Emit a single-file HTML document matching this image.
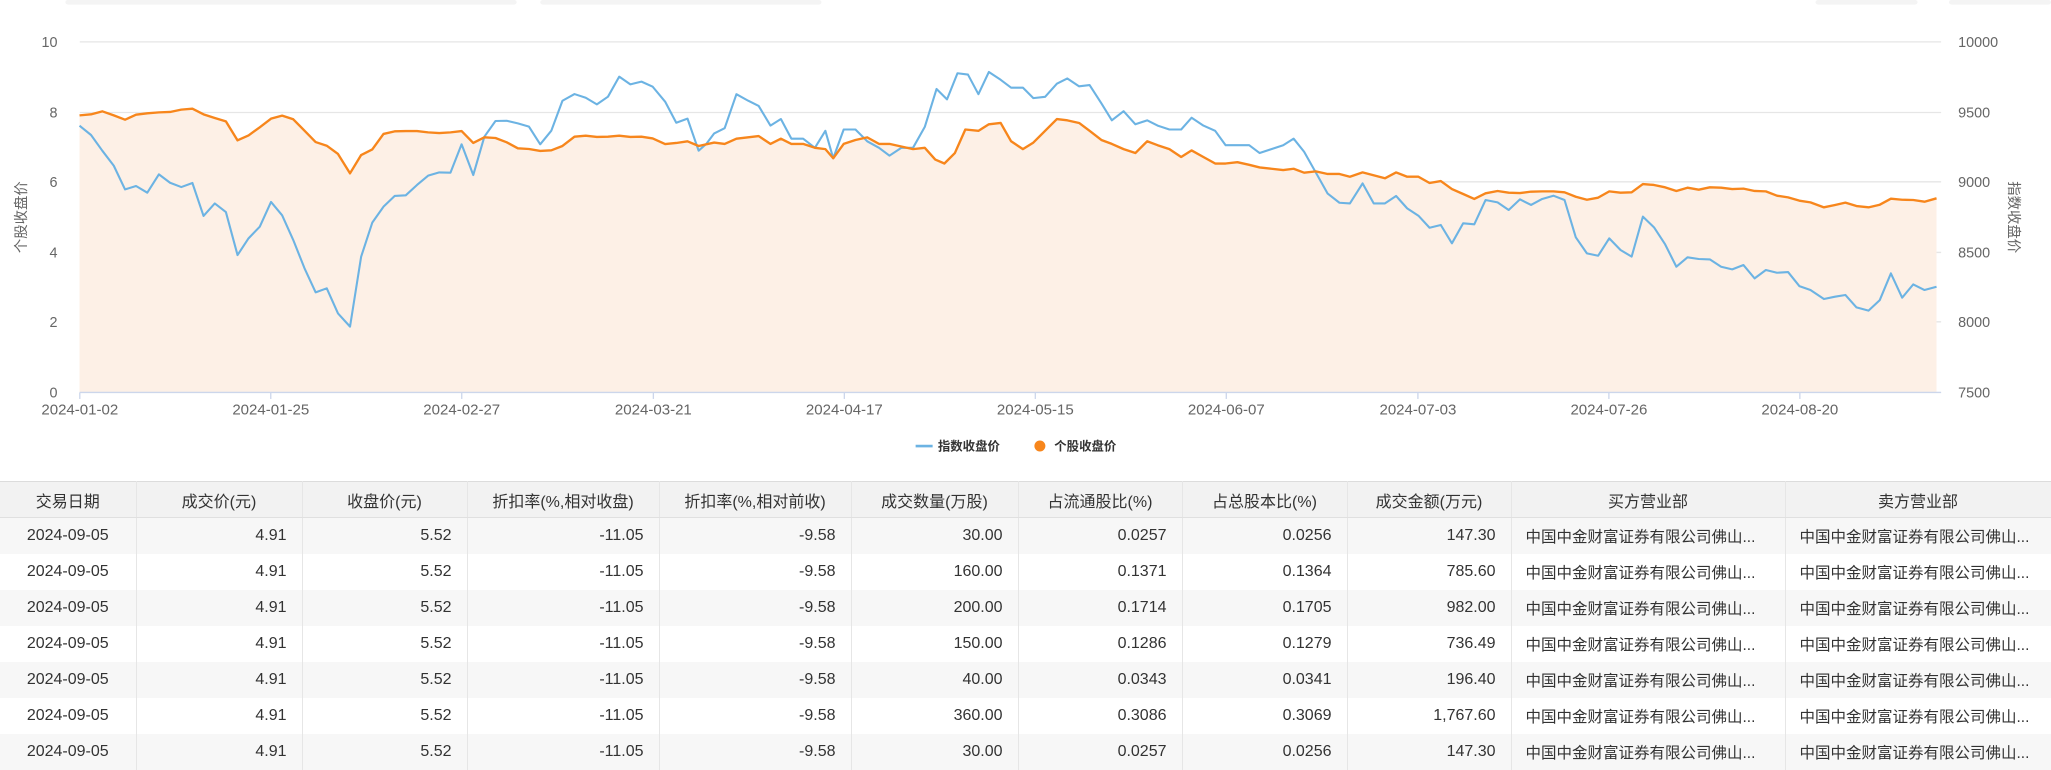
<!DOCTYPE html>
<html><head><meta charset="utf-8"><style>
body{margin:0;width:2051px;height:769px;overflow:hidden;background:#fff;font-family:"Liberation Sans","Noto Sans CJK SC",sans-serif;position:relative}
svg{position:absolute;left:0;top:0}
table{position:absolute;left:0;top:481px;border-collapse:collapse;table-layout:fixed;width:2051px;font-size:16px;color:#333}
td,th{height:36px;padding:0 15px;border-right:1px solid #e6e6e6;white-space:nowrap;overflow:hidden;box-sizing:border-box;font-weight:normal}
th{background:#f2f2f2;text-align:center;border-top:1px solid #dcdcdc;border-bottom:1px solid #e0e0e0}
td{text-align:right}
td:first-child{text-align:center}
td.b{text-align:left;padding-left:14px;font-size:15.5px}
tr:nth-child(even) td{background:#f7f7f7}
</style></head><body>
<svg width="2051" height="470" viewBox="0 0 1568 359.3" font-family="Liberation Sans,Noto Sans CJK SC,sans-serif">
<rect x="50" y="0" width="345" height="3.5" rx="2" fill="#f4f4f4"/>
<rect x="413" y="0" width="215" height="3.5" rx="2" fill="#f4f4f4"/>
<rect x="1388" y="0" width="78" height="3.5" rx="2" fill="#f4f4f4"/>
<rect x="1490" y="0" width="78" height="3.5" rx="2" fill="#f4f4f4"/>
<g stroke="#e6e6e6" stroke-width="1">
<line x1="61" x2="1484" y1="32" y2="32"/><line x1="61" x2="1484" y1="86" y2="86"/><line x1="61" x2="1484" y1="139" y2="139"/><line x1="61" x2="1484" y1="193" y2="193"/><line x1="61" x2="1484" y1="246" y2="246"/>
</g>
<polygon fill="#fdf0e6" points="60.8,300 60.8,88.2 69.6,87.4 78.2,85.1 87,88.2 95.6,91.5 104,87.7 112.6,86.6 121.5,85.9 130,85.6 138.6,83.8 147.1,83.1 155.6,87.4 164.2,90.2 172.7,92.8 181.6,107.3 190,103.5 198.6,97.3 207.2,90.7 215.7,88.4 224.2,91.2 232.8,99.9 241.3,108.6 249.8,111.4 258.4,117.7 267.6,132.5 276.1,118.5 284.6,114.2 293.2,102.4 301.7,100.4 310.2,100.2 318.8,100.2 327.3,101.2 335.8,101.7 344.4,101.2 352.9,100.2 361.8,109.3 370.3,105 378.8,105.5 387.4,108.8 395.9,113.4 404.4,113.9 413,115.4 421.5,114.9 430,111.6 439.2,104.5 447.8,103.7 456.3,104.7 464.8,104.5 473.4,103.7 481.9,104.7 490.4,104.5 499,105.8 508.5,110.1 517,109.3 525.6,108 534.1,111.6 546,109 554,110 563,106 572,105 580,104 589,110 597,106 605,110 614,110 623,113 631,114 637,121 645,110 654,107 663,105 672,110 680,110 689,112 698,114 707,113 715,122 722,125 730,117 738,99 748,100 756,95 765,94 773,108 782,114 790,109 799,100 808,91 816,92 825,94 833,100 842,107 850,110 859,114 868,117 877,108 885,111 894,114 903,120 911,115 920,120 929,125 937,125 946,124 955,126 963,128 972,129 981,130 989,129 997,132 1006,131 1015,133 1024,133 1032,135.1 1041.7,131.8 1058.8,136.3 1067.3,131.8 1075.8,135.1 1084.4,135.1 1092.9,139.9 1101.5,138.4 1110,144.5 1118.6,148.3 1127.1,152.1 1135.7,147.8 1144.9,146 1153.4,147.3 1162,147.6 1170.5,146.5 1179,146.3 1187.6,146.3 1196.1,147 1204.7,150.4 1213.2,152.7 1221.8,151.1 1230.3,146.3 1238.9,147.3 1247.4,147 1256,140.7 1264.5,141.4 1273,143.2 1281.6,146 1290.1,143.5 1298.7,145 1307.2,143.2 1315.8,143.5 1324.3,144.5 1332.9,144.2 1341.4,146 1350,146.3 1358.5,149.6 1367,150.9 1375.6,153.4 1384.1,154.7 1394.4,158.5 1402.9,156.7 1410.8,154.9 1419.3,157.5 1428.5,158.5 1437.1,156.5 1445.6,151.9 1454.2,152.7 1462.7,152.9 1471.3,154.2 1480.5,151.6 1480.5,300"/>
<line x1="61" x2="1484" y1="300" y2="300" stroke="#ccd6eb"/>
<g stroke="#ccd6eb"><line x1="61" x2="61" y1="300" y2="305"/><line x1="207" x2="207" y1="300" y2="305"/><line x1="353" x2="353" y1="300" y2="305"/><line x1="499.5" x2="499.5" y1="300" y2="305"/><line x1="645.5" x2="645.5" y1="300" y2="305"/><line x1="791.5" x2="791.5" y1="300" y2="305"/><line x1="937.5" x2="937.5" y1="300" y2="305"/><line x1="1084" x2="1084" y1="300" y2="305"/><line x1="1230" x2="1230" y1="300" y2="305"/><line x1="1376" x2="1376" y1="300" y2="305"/></g>
<polyline fill="none" stroke="#6cb3e3" stroke-width="1.6" stroke-linejoin="round" points="60.8,96.1 69.6,103.2 78.2,115.2 87,126.7 95.6,144.8 104,142.2 112.6,147.3 121.5,133.3 130,139.7 138.6,143 147.1,139.9 155.6,165.1 164.2,155.5 172.7,162.1 181.6,195 190,182.2 198.6,173.3 207.2,154.4 215.7,164.6 224.2,183.5 232.8,205.1 241.3,223.5 249.8,220.4 258.4,239.6 267.6,249.7 276.1,196.2 284.6,170.2 293.2,158 301.7,149.8 310.2,149.3 318.8,141.4 327.3,134.3 335.8,131.8 344.4,132 352.9,110.3 361.8,133.8 370.3,104.5 378.8,92.5 387.4,92.3 395.9,94.3 404.4,96.8 413,110.3 421.5,99.9 430,77 439.2,71.9 447.8,74.7 456.3,79.8 464.8,73.9 473.4,58.6 481.9,64.5 490.4,62.4 499,66.3 508.5,77.7 517,93.8 525.6,90.7 534.1,115.2 540,110 546,102 554,98 563,72 572,77 580,81 589,96 597,91 605,106 614,106 623,113 631,100 637,121 645,99 654,99 663,108 672,113 680,119 689,113 698,113 707,97 716,68 724,76 732,56 740,57 748,72 756,55 765,61 773,67 782,67 790,75 799,74 808,64 816,60 825,66 833,65 842,79 850,92 859,85 868,95 877,92 885,96 894,99 903,99 911,90 920,96 929,100 937,111 946,111 955,111 963,117 972,114 981,111 989,106 997,116 1006,132 1015,148 1024,155 1032,155.5 1041.7,140.2 1050.2,155.5 1058.8,155.5 1067.3,149.8 1075.8,159.3 1084.4,164.9 1092.9,174.1 1101.5,172 1110,186 1118.6,170.7 1127.1,171.5 1135.7,152.9 1144.9,154.7 1153.4,160.5 1162,152.4 1170.5,156.7 1179,152.1 1187.6,149.6 1196.1,152.9 1204.7,181.4 1213.2,193.7 1221.8,195.5 1230.3,182.2 1238.9,191.1 1247.4,196.2 1256,165.6 1264.5,173.8 1273,186.8 1281.6,203.9 1290.1,196.7 1298.7,198 1307.2,198.3 1315.8,203.9 1324.3,205.9 1332.9,202.6 1341.4,212.8 1350,206.4 1358.5,208.5 1367,208 1375.6,218.7 1384.1,221.7 1394.4,228.6 1402.9,226.8 1410.8,225.5 1419.3,235 1428.5,237.5 1437.1,229.4 1445.6,209 1454.2,227.6 1462.7,217.4 1471.3,221.7 1480.5,219.2"/>
<polyline fill="none" stroke="#f7861c" stroke-width="1.8" stroke-linejoin="round" points="60.8,88.2 69.6,87.4 78.2,85.1 87,88.2 95.6,91.5 104,87.7 112.6,86.6 121.5,85.9 130,85.6 138.6,83.8 147.1,83.1 155.6,87.4 164.2,90.2 172.7,92.8 181.6,107.3 190,103.5 198.6,97.3 207.2,90.7 215.7,88.4 224.2,91.2 232.8,99.9 241.3,108.6 249.8,111.4 258.4,117.7 267.6,132.5 276.1,118.5 284.6,114.2 293.2,102.4 301.7,100.4 310.2,100.2 318.8,100.2 327.3,101.2 335.8,101.7 344.4,101.2 352.9,100.2 361.8,109.3 370.3,105 378.8,105.5 387.4,108.8 395.9,113.4 404.4,113.9 413,115.4 421.5,114.9 430,111.6 439.2,104.5 447.8,103.7 456.3,104.7 464.8,104.5 473.4,103.7 481.9,104.7 490.4,104.5 499,105.8 508.5,110.1 517,109.3 525.6,108 534.1,111.6 546,109 554,110 563,106 572,105 580,104 589,110 597,106 605,110 614,110 623,113 631,114 637,121 645,110 654,107 663,105 672,110 680,110 689,112 698,114 707,113 715,122 722,125 730,117 738,99 748,100 756,95 765,94 773,108 782,114 790,109 799,100 808,91 816,92 825,94 833,100 842,107 850,110 859,114 868,117 877,108 885,111 894,114 903,120 911,115 920,120 929,125 937,125 946,124 955,126 963,128 972,129 981,130 989,129 997,132 1006,131 1015,133 1024,133 1032,135.1 1041.7,131.8 1058.8,136.3 1067.3,131.8 1075.8,135.1 1084.4,135.1 1092.9,139.9 1101.5,138.4 1110,144.5 1118.6,148.3 1127.1,152.1 1135.7,147.8 1144.9,146 1153.4,147.3 1162,147.6 1170.5,146.5 1179,146.3 1187.6,146.3 1196.1,147 1204.7,150.4 1213.2,152.7 1221.8,151.1 1230.3,146.3 1238.9,147.3 1247.4,147 1256,140.7 1264.5,141.4 1273,143.2 1281.6,146 1290.1,143.5 1298.7,145 1307.2,143.2 1315.8,143.5 1324.3,144.5 1332.9,144.2 1341.4,146 1350,146.3 1358.5,149.6 1367,150.9 1375.6,153.4 1384.1,154.7 1394.4,158.5 1402.9,156.7 1410.8,154.9 1419.3,157.5 1428.5,158.5 1437.1,156.5 1445.6,151.9 1454.2,152.7 1462.7,152.9 1471.3,154.2 1480.5,151.6"/>
<g font-size="11" fill="#666" text-anchor="end">
<text x="44" y="36">10</text><text x="44" y="90">8</text><text x="44" y="143">6</text><text x="44" y="197">4</text><text x="44" y="250">2</text><text x="44" y="304">0</text>
</g>
<g font-size="11" fill="#666">
<text x="1497" y="36">10000</text><text x="1497" y="90">9500</text><text x="1497" y="143">9000</text><text x="1497" y="197">8500</text><text x="1497" y="250">8000</text><text x="1497" y="304">7500</text>
</g>
<g font-size="11.5" fill="#666" text-anchor="middle">
<text x="61" y="317">2024-01-02</text><text x="207" y="317">2024-01-25</text><text x="353" y="317">2024-02-27</text><text x="499.5" y="317">2024-03-21</text><text x="645.5" y="317">2024-04-17</text><text x="791.5" y="317">2024-05-15</text><text x="937.5" y="317">2024-06-07</text><text x="1084" y="317">2024-07-03</text><text x="1230" y="317">2024-07-26</text><text x="1376" y="317">2024-08-20</text>
</g>
<text font-size="11" fill="#666" text-anchor="middle" transform="translate(20,166) rotate(-90)">个股收盘价</text>
<text font-size="11" fill="#666" text-anchor="middle" transform="translate(1536,166) rotate(90)">指数收盘价</text>
<line x1="700" x2="713" y1="341" y2="341" stroke="#6cb3e3" stroke-width="2"/>
<text x="717" y="344.5" font-size="9.5" font-weight="bold" fill="#333">指数收盘价</text>
<circle cx="795" cy="341" r="4.2" fill="#f7861c"/>
<text x="806" y="344.5" font-size="9.5" font-weight="bold" fill="#333">个股收盘价</text>
</svg>
<table>
<colgroup><col style="width:136px"><col style="width:166px"><col style="width:165px"><col style="width:192px"><col style="width:192px"><col style="width:167px"><col style="width:164px"><col style="width:165px"><col style="width:164px"><col style="width:274px"><col style="width:266px"></colgroup>
<tr><th>交易日期</th><th>成交价(元)</th><th>收盘价(元)</th><th>折扣率(%,相对收盘)</th><th>折扣率(%,相对前收)</th><th>成交数量(万股)</th><th>占流通股比(%)</th><th>占总股本比(%)</th><th>成交金额(万元)</th><th>买方营业部</th><th>卖方营业部</th></tr>
<tr><td>2024-09-05</td><td>4.91</td><td>5.52</td><td>-11.05</td><td>-9.58</td><td>30.00</td><td>0.0257</td><td>0.0256</td><td>147.30</td><td class="b">中国中金财富证券有限公司佛山...</td><td class="b">中国中金财富证券有限公司佛山...</td></tr>
<tr><td>2024-09-05</td><td>4.91</td><td>5.52</td><td>-11.05</td><td>-9.58</td><td>160.00</td><td>0.1371</td><td>0.1364</td><td>785.60</td><td class="b">中国中金财富证券有限公司佛山...</td><td class="b">中国中金财富证券有限公司佛山...</td></tr>
<tr><td>2024-09-05</td><td>4.91</td><td>5.52</td><td>-11.05</td><td>-9.58</td><td>200.00</td><td>0.1714</td><td>0.1705</td><td>982.00</td><td class="b">中国中金财富证券有限公司佛山...</td><td class="b">中国中金财富证券有限公司佛山...</td></tr>
<tr><td>2024-09-05</td><td>4.91</td><td>5.52</td><td>-11.05</td><td>-9.58</td><td>150.00</td><td>0.1286</td><td>0.1279</td><td>736.49</td><td class="b">中国中金财富证券有限公司佛山...</td><td class="b">中国中金财富证券有限公司佛山...</td></tr>
<tr><td>2024-09-05</td><td>4.91</td><td>5.52</td><td>-11.05</td><td>-9.58</td><td>40.00</td><td>0.0343</td><td>0.0341</td><td>196.40</td><td class="b">中国中金财富证券有限公司佛山...</td><td class="b">中国中金财富证券有限公司佛山...</td></tr>
<tr><td>2024-09-05</td><td>4.91</td><td>5.52</td><td>-11.05</td><td>-9.58</td><td>360.00</td><td>0.3086</td><td>0.3069</td><td>1,767.60</td><td class="b">中国中金财富证券有限公司佛山...</td><td class="b">中国中金财富证券有限公司佛山...</td></tr>
<tr><td>2024-09-05</td><td>4.91</td><td>5.52</td><td>-11.05</td><td>-9.58</td><td>30.00</td><td>0.0257</td><td>0.0256</td><td>147.30</td><td class="b">中国中金财富证券有限公司佛山...</td><td class="b">中国中金财富证券有限公司佛山...</td></tr>
</table>
</body></html>
